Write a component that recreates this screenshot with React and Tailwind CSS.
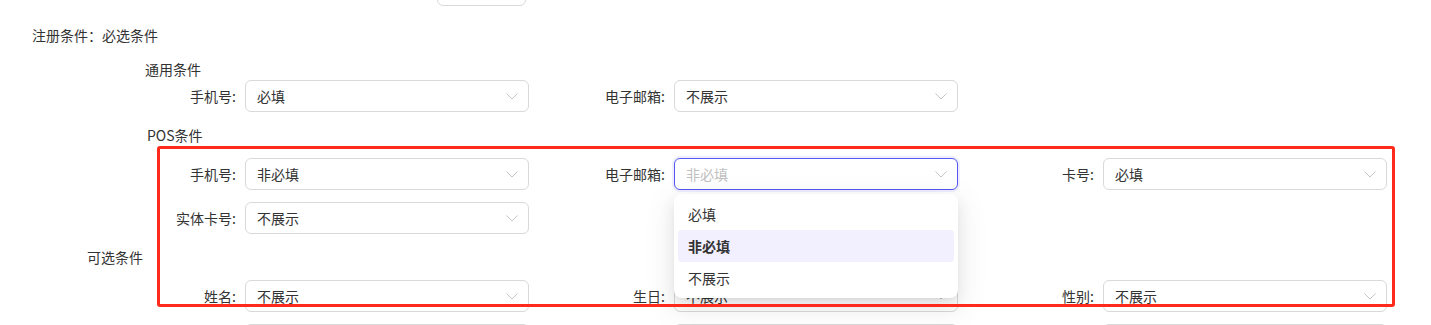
import React from 'react';

const Chevron = ({ className = '' }) => (
    <svg width="12" height="7" viewBox="0 0 12 7" fill="none" className={className}>
        <polyline points="0.5,0.5 6,6 11.5,0.5" stroke="#c4c4c4" strokeWidth="1" />
    </svg>
);

const Select = ({ value, placeholder, focused }) => (
    <div
        className={
            'w-[284px] h-8 rounded-md bg-white flex items-center justify-between pl-[11px] pr-[10px] ' +
            (focused
                ? 'border border-[#5457f2] shadow-[0_0_0_2px_rgba(84,87,242,0.1)]'
                : 'border border-[#d9d9d9]')
        }
    >
        {value ? (
            <span className="text-[14px] text-[#333]">{value}</span>
        ) : (
            <span className="text-[14px] text-[#bfbfbf]">{placeholder}</span>
        )}
        <Chevron />
    </div>
);

const Field = ({ label, ...rest }) => (
    <div className="w-[429px] flex items-center">
        <label className="w-[145px] pr-[9px] text-right text-[14px] text-[#333] whitespace-nowrap">
            {label}:
        </label>
        <Select {...rest} />
    </div>
);

const Row = ({ children, className = '' }) => (
    <div className={'flex pl-[100px] ' + className}>{children}</div>
);

const App = () => {
    return (
        <div
            className="relative w-[1431px] h-[325px] overflow-hidden bg-white"
            style={{ fontFamily: '"Noto Sans CJK SC", "Noto Sans", sans-serif' }}
        >
            {/* previous field, cut off at top */}
            <div className="ml-[437px] -mt-[26px] w-[89px] h-8 border border-[#d9d9d9] rounded-md" />

            <p className="mt-[18px] pl-[32px] text-[14px] leading-[22px] text-[#333]">注册条件：必选条件</p>

            <p className="mt-[12px] pl-[145px] text-[14px] leading-[22px] text-[#333]">通用条件</p>
            <Row>
                <Field label="手机号" value="必填" />
                <Field label="电子邮箱" value="不展示" />
            </Row>

            <p className="mt-[12px] pl-[147px] text-[14px] leading-[22px] text-[#333]">POS条件</p>
            <Row className="mt-[12px]">
                <Field label="手机号" value="非必填" />
                <Field label="电子邮箱" placeholder="非必填" focused />
                <Field label="卡号" value="必填" />
            </Row>
            <Row className="mt-[12px]">
                <Field label="实体卡号" value="不展示" />
            </Row>

            <p className="mt-[12px] pl-[87px] text-[14px] leading-[22px] text-[#333]">可选条件</p>
            <Row className="mt-[12px]">
                <Field label="姓名" value="不展示" />
                <Field label="生日" value="不展示" />
                <Field label="性别" value="不展示" />
            </Row>
            {/* next row, only its top edge is in view */}
            <Row className="mt-[12px]">
                <Field label="手机号" value="不展示" />
                <Field label="电子邮箱" value="不展示" />
                <Field label="地址" value="不展示" />
            </Row>

            {/* open dropdown of 电子邮箱 */}
            <div className="absolute left-[674px] top-[194px] w-[284px] p-1 bg-white rounded-lg shadow-[0_6px_16px_0_rgba(0,0,0,0.08),0_3px_6px_-4px_rgba(0,0,0,0.12),0_9px_28px_8px_rgba(0,0,0,0.05)] z-10">
                <div className="h-8 flex items-center px-[10px] rounded text-[14px] text-[#333]">必填</div>
                <div className="h-8 flex items-center px-[10px] rounded bg-[#f2f0ff] text-[14px] font-semibold text-[#333]">非必填</div>
                <div className="h-8 flex items-center px-[10px] rounded text-[14px] text-[#333]">不展示</div>
            </div>

            {/* annotation frame */}
            <div className="absolute left-[157px] top-[146px] w-[1238px] h-[161px] border-[3px] border-[#ff2a1c] rounded-[3px] z-20" />
        </div>
    );
};

export default App;
